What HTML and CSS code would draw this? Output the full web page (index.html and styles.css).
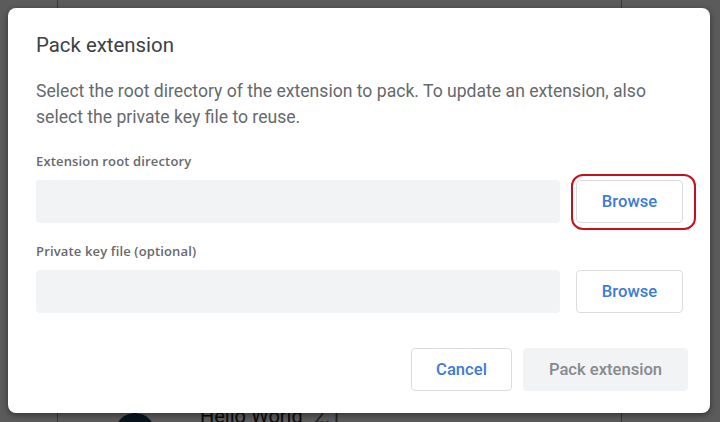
FILE: index.html
```html
<!DOCTYPE html>
<html lang="en">
<head>
<meta charset="utf-8">
<title>Pack extension</title>
<link rel="stylesheet" href="styles.css">
</head>
<body>
<div class="page">
  <div class="card">
    <div class="item">
      <div class="avatar"></div>
      <div class="item-name">Hello World <span class="ver">2.1</span></div>
    </div>
  </div>
</div>
<div class="scrim"></div>
<div class="dialog" role="dialog" aria-labelledby="dlg-title">
  <h1 class="title" id="dlg-title">Pack extension</h1>
  <p class="desc">Select the root directory of the extension to pack. To update an extension, also select the private key file to reuse.</p>
  <div class="field">
    <label class="label">Extension root directory</label>
    <div class="row">
      <div class="input"></div>
      <button class="btn browse highlighted">Browse<span class="mark"></span></button>
    </div>
  </div>
  <div class="field">
    <label class="label">Private key file (optional)</label>
    <div class="row">
      <div class="input"></div>
      <button class="btn browse">Browse</button>
    </div>
  </div>
  <div class="actions">
    <button class="btn cancel">Cancel</button>
    <button class="btn primary" disabled>Pack extension</button>
  </div>
</div>
</body>
</html>
```

FILE: styles.css
```css
* { box-sizing: border-box; }
html, body { margin: 0; padding: 0; }
body {
  width: 720px;
  height: 422px;
  overflow: hidden;
  background: #ffffff;
  font-family: Roboto, "Liberation Sans", Arial, sans-serif;
  position: relative;
}
.page {
  height: 422px;
  padding: 0 98px 0 57px;
  overflow: hidden;
}
.card {
  height: 100%;
  overflow: hidden;
  border-left: 1px solid #9a9a9a;
  border-right: 1px solid #9a9a9a;
  padding: 404px 0 0 57px;
}
.item {
  display: flex;
  align-items: flex-start;
  gap: 45px;
}
.avatar {
  width: 40px;
  height: 40px;
  border-radius: 50%;
  background: #1e3a52;
  margin-top: 9px;
}
.item-name {
  font-size: 20px;
  line-height: 24px;
  color: #202124;
}
.ver { color: #5f6368; margin-left: 6px; }
.scrim {
  position: absolute;
  inset: 0;
  background: rgba(0, 0, 0, 0.645);
}
.dialog {
  position: absolute;
  left: 8px;
  top: 8px;
  width: 702px;
  height: 405px;
  background: #ffffff;
  border-radius: 8px;
  box-shadow: 0 2px 6px rgba(0,0,0,0.45);
  padding: 25px 27px 22px 28px;
  display: flex;
  flex-direction: column;
}
.title {
  margin: 0;
  font-size: 20.4px;
  line-height: 24px;
  font-weight: 400;
  color: #3c4043;
}
.desc {
  margin: 21px 0 0;
  max-width: 630px;
  font-size: 17.6px;
  line-height: 26px;
  color: #66696d;
}
.field { margin-top: 23px; }
.field + .field { margin-top: 20px; }
.label {
  display: block;
  font-family: "Open Sans", "Noto Sans", sans-serif;
  font-weight: 600;
  font-size: 13px;
  line-height: 16px;
  color: #67696c;
  letter-spacing: 0.15px;
}
.row {
  margin-top: 11px;
  display: flex;
  gap: 16px;
  align-items: stretch;
}
.input {
  flex: 1;
  height: 43px;
  background: #f1f3f4;
  border-radius: 4px;
}
.btn {
  font-family: Roboto, "Liberation Sans", Arial, sans-serif;
  font-size: 16.6px;
  font-weight: 500;
  border-radius: 4px;
  border: 1px solid #dadce0;
  background: #ffffff;
  color: #3d7ad8;
  height: 43px;
  padding: 0;
  position: relative;
}
.browse { width: 107px; }
.mark {
  position: absolute;
  top: -7px;
  left: -6px;
  right: -14px;
  bottom: -8px;
  border: 2.5px solid #c3121c;
  border-radius: 12px;
  pointer-events: none;
}
.actions {
  margin-top: auto;
  margin-right: -5px;
  display: flex;
  justify-content: flex-end;
  gap: 11px;
}
.cancel { width: 101px; }
.primary {
  width: 165px;
  background: #f1f3f4;
  border-color: #f1f3f4;
  color: #868a8e;
}
```
